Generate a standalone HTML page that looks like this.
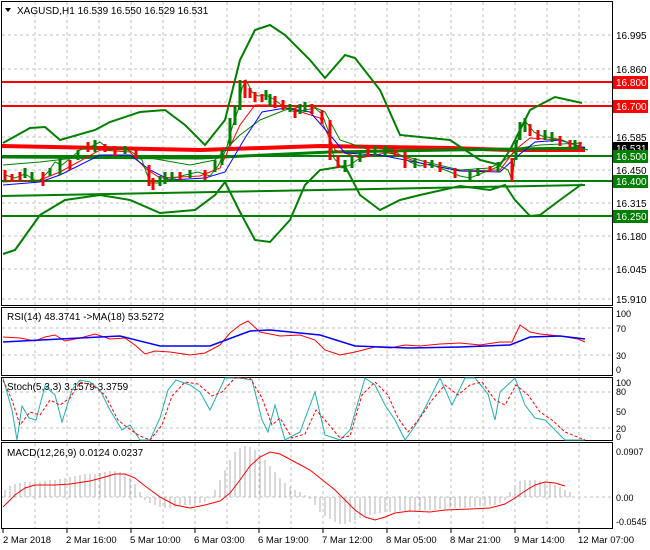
<!DOCTYPE html>
<html><head><meta charset="utf-8"><style>
body{margin:0;background:#fff}
svg{display:block;font-family:"Liberation Sans",sans-serif;font-size:10px}
</style></head><body>
<svg width="650" height="550" viewBox="0 0 650 550" xmlns="http://www.w3.org/2000/svg">
<rect width="650" height="550" fill="#fff"/>
<g fill="none" stroke="#000" stroke-width="1">
<rect x="1.5" y="1.5" width="611" height="304"/>
<rect x="1.5" y="307.5" width="611" height="68"/>
<rect x="1.5" y="377.5" width="611" height="63"/>
<rect x="1.5" y="442.5" width="611" height="86"/>
</g>
<g stroke="#c0c0c0" stroke-dasharray="3,3" stroke-width="1">
<path d="M35 2V305M67 2V305M99 2V305M131 2V305M163 2V305M195 2V305M227 2V305M259 2V305M291 2V305M323 2V305M355 2V305M387 2V305M419 2V305M451 2V305M483 2V305M515 2V305M547 2V305M579 2V305"/>
<path d="M35 308V375M67 308V375M99 308V375M131 308V375M163 308V375M195 308V375M227 308V375M259 308V375M291 308V375M323 308V375M355 308V375M387 308V375M419 308V375M451 308V375M483 308V375M515 308V375M547 308V375M579 308V375"/>
<path d="M35 378V440M67 378V440M99 378V440M131 378V440M163 378V440M195 378V440M227 378V440M259 378V440M291 378V440M323 378V440M355 378V440M387 378V440M419 378V440M451 378V440M483 378V440M515 378V440M547 378V440M579 378V440"/>
<path d="M35 443V528M67 443V528M99 443V528M131 443V528M163 443V528M195 443V528M227 443V528M259 443V528M291 443V528M323 443V528M355 443V528M387 443V528M419 443V528M451 443V528M483 443V528M515 443V528M547 443V528M579 443V528"/>
<path d="M2 35H612M2 69H612M2 102H612M2 137H612M2 170H612M2 203H612M2 236H612M2 269H612M2 299H612"/>
<path d="M2 328H612M2 355H612M2 392H612M2 428H612M2 497H612"/>
</g>
<g stroke-width="2" fill="none">
<path d="M2 82H612M2 106H612" stroke="#f00"/>
<path d="M2 156H612M2 181H612M2 216H612" stroke="#007f00"/>
<path d="M2 196L585 185" stroke="#007f00"/>
<path d="M2 146L200 150L320 146L450 148L510 150L585 150" stroke="#f00" stroke-width="4"/>
<path d="M2 157L200 158L330 152L450 150L585 148" stroke="#007f00" stroke-width="3"/>
</g>
<g fill="none" stroke="#007f00" stroke-width="2">
<path d="M3 143L30 128L45 127L60 140L95 130L110 122L140 112L165 110L185 125L205 145L225 120L240 60L255 30L270 25L285 35L310 60L325 78L345 55L355 58L380 90L400 135L450 140L480 160L500 165L510 150L530 110L555 97L582 103"/>
<path d="M3 254L15 250L40 215L65 200L100 195L130 200L160 213L195 210L215 195L225 182L240 212L255 240L270 242L290 220L305 185L320 170L345 166L360 195L380 210L400 200L420 195L460 186L490 190L505 185L515 200L530 216L540 215L560 200L582 184"/>
<path d="M3 165L40 162L100 155L150 158L190 165L215 160L240 135L260 120L285 110L310 105L325 112L340 140L370 150L400 155L430 163L460 170L490 168L505 160L520 148L540 145L582 143" stroke-width="1"/>
</g>
<g fill="none" stroke-width="1">
<path d="M3 182L40 180L60 172L100 150L130 152L145 168L160 178L200 176L220 168L240 125L255 105L275 105L295 110L320 118L335 150L360 158L390 152L420 163L460 171L500 170L515 150L530 138L560 140L585 148" stroke="#f00"/>
<path d="M3 185L40 182L60 175L100 155L130 155L150 170L170 180L205 178L225 172L245 138L262 112L285 108L310 112L330 135L345 153L380 155L420 163L460 171L500 172L515 158L535 142L560 140L585 148" stroke="#00f"/>
</g>
<g fill="none">
<path d="M5 175L15 178L25 174L38 182L48 172L55 162L62 165L72 157L80 150L92 146L100 142L110 150L122 148L132 152L142 160L150 183L158 183L166 180L175 178L185 175L198 172L210 176L218 166L226 150L232 128L238 110L242 88L246 80L252 92L258 96L266 95L275 100L285 108L295 112L305 110L315 108L322 114L328 130L334 158L342 168L350 165L360 158L370 152L380 150L392 149L400 155L410 162L420 166L430 164L440 168L450 172L460 176L470 178L480 174L490 170L500 166L508 170L512 180L516 150L520 128L526 122L534 132L542 136L552 138L562 140L572 144L582 148L588 150" stroke="#007f00" stroke-width="1"/>
</g>
<g stroke="#f00" stroke-width="3">
<path d="M5 170V180M12 174V182M20 172V180M43 172V186M70 160V170M88 142V152M105 144V152M115 146V156M136 148V158M149 165V186M153 178V190M180 172V180M205 170V180M245 80V98M250 88V98M255 92V102M262 94V102M275 96V108M283 100V110M295 108V118M312 104V114M322 110V124M330 120V160M338 155V168M368 148V156M395 146V156M405 152V168M425 160V168M440 162V172M455 168V178M490 166V172M512 158V182M530 124V136M538 130V140M560 136V146M570 140V148M580 142V152"/>
</g>
<g stroke="#007f00" stroke-width="3">
<path d="M25 168V178M32 172V182M50 168V176M60 158V175M78 150V160M95 140V152M125 146V154M160 176V186M165 172V184M172 172V182M190 170V178M215 160V172M222 150V165M230 118V145M235 105V125M240 80V110M266 90V100M270 94V106M290 104V112M300 104V114M305 102V112M345 160V172M352 156V168M360 152V162M375 146V156M385 146V156M415 158V168M432 160V168M470 170V182M478 168V176M498 162V172M516 140V160M520 122V140M525 118V132M545 130V140M552 132V142M575 140V150"/>
</g>
<g fill="#000">
<text x="616" y="39">16.995</text><text x="616" y="73">16.860</text>
<text x="616" y="141">16.585</text><text x="616" y="174">16.450</text>
<text x="616" y="207">16.315</text><text x="616" y="240">16.180</text>
<text x="616" y="273">16.045</text><text x="616" y="303">15.910</text>
</g>
<rect x="613" y="76" width="35" height="13" fill="#f00"/><text x="616" y="86" fill="#fff">16.800</text>
<rect x="613" y="100" width="35" height="13" fill="#f00"/><text x="616" y="110" fill="#fff">16.700</text>
<rect x="613" y="142" width="35" height="12" fill="#000"/><text x="616" y="152" fill="#fff">16.531</text>
<rect x="613" y="150" width="35" height="13" fill="#007f00"/><text x="616" y="160" fill="#fff">16.500</text>
<rect x="613" y="175" width="35" height="13" fill="#007f00"/><text x="616" y="185" fill="#fff">16.400</text>
<rect x="613" y="210" width="35" height="13" fill="#007f00"/><text x="616" y="220" fill="#fff">16.250</text>
<path d="M5 8L11 8L8 12Z" fill="#000"/>
<text x="17" y="14" fill="#000">XAGUSD,H1  16.539 16.550 16.529 16.531</text>
<text x="7" y="320">RSI(14) 48.3741  -&gt;MA(18) 53.5272</text>
<g font-size="9"><text x="616" y="317">100</text><text x="616" y="332">70</text><text x="616" y="359">30</text><text x="616" y="373">0</text></g>
<path d="M3 337L20 338L35 341L45 337L55 335L65 341L80 338L95 334L110 339L125 338L135 345L145 354L155 351L170 352L190 355L205 353L220 345L230 333L240 325L248 321L260 332L280 336L300 335L315 340L325 350L340 355L355 352L375 347L390 348L405 345L420 346L440 344L460 343L480 345L500 342L512 342L520 325L530 332L540 334L560 336L578 339L585 342" fill="none" stroke="#f00"/>
<path d="M3 342L60 339L120 336L160 346L210 346L250 331L270 330L320 335L355 346L410 348L460 347L510 345L530 337L560 336L585 339" fill="none" stroke="#00f" stroke-width="1.5"/>
<text x="7" y="390">Stoch(5,3,3) 3.1579 3.3759</text>
<g font-size="9"><text x="616" y="386">100</text><text x="616" y="395">80</text><text x="616" y="415">50</text><text x="616" y="432">20</text><text x="616" y="440">0</text></g>
<path d="M3 378L12 410L17 440L22 406L29 418L36 420L45 386L55 395L62 422L72 390L80 380L90 382L100 390L110 410L122 430L130 425L140 440L150 440L160 418L168 390L176 380L190 385L200 392L210 410L225 378L240 378L252 380L262 420L268 432L275 405L285 440L300 432L315 392L325 435L340 440L350 430L365 378L375 385L385 405L395 420L405 440L415 426L425 408L440 378L452 405L465 378L475 378L488 394L495 420L500 392L515 378L525 405L535 418L545 420L553 428L565 440L585 440" fill="none" stroke="#20b0b0"/>
<path d="M3 380L12 400L20 425L30 412L40 415L50 400L60 405L70 398L80 382L92 385L105 395L118 420L128 428L140 436L150 440L162 425L172 396L185 382L198 384L212 396L222 392L235 378L250 378L262 398L272 425L280 418L292 438L305 434L316 410L325 420L340 438L350 436L362 395L375 382L388 395L398 418L408 432L420 418L432 400L445 385L458 395L470 385L482 382L495 400L505 405L516 385L528 395L540 412L552 420L565 432L585 440" fill="none" stroke="#f00" stroke-dasharray="3,2"/>
<text x="7" y="456">MACD(12,26,9) 0.0124 0.0237</text>
<g font-size="9"><text x="616" y="455">0.0907</text><text x="616" y="501">0.00</text><text x="616" y="525">-0.0545</text></g>
<g stroke="#b0b0b0" stroke-width="1">
<path d="M5 497V490M10 497V486M15 497V484M20 497V483M25 497V482M30 497V482M35 497V482M40 497V482M45 497V481M50 497V480M55 497V480M60 497V479M65 497V478M70 497V477M75 497V476M80 497V475M85 497V474M90 497V474M95 497V474M100 497V473M105 497V472M110 497V471M115 497V471M120 497V472M125 497V474M130 497V478M135 497V484M140 497V492M145 497V500M150 497V503M155 497V505M160 497V507M165 497V508M170 497V508M175 497V507M180 497V506M185 497V505M190 497V505M195 497V504M200 497V503M205 497V502M210 497V498M215 497V490M220 497V480M225 497V470M230 497V460M235 497V452M240 497V448M245 497V446M250 497V447M255 497V450M260 497V455M265 497V460M270 497V466M275 497V472M280 497V478M285 497V483M290 497V487M295 497V490M300 497V492M305 497V495M310 497V499M315 497V505M320 497V512M325 497V516M330 497V519M335 497V522M340 497V524M345 497V524M350 497V522M355 497V520M360 497V518M365 497V516M370 497V515M375 497V514M380 497V513M385 497V512M390 497V512M395 497V512M400 497V511M405 497V511M410 497V511M415 497V511M420 497V510M425 497V510M430 497V510M435 497V510M440 497V509M445 497V509M450 497V508M455 497V508M460 497V508M465 497V508M470 497V507M475 497V507M480 497V506M485 497V506M490 497V505M495 497V505M500 497V503M505 497V500M510 497V492M515 497V485M520 497V481M525 497V480M530 497V480M535 497V480M540 497V481M545 497V482M550 497V483M555 497V485M560 497V487M565 497V490M570 497V492"/>
</g>
<path d="M3 507L15 495L25 488L35 485L55 485L70 484L90 481L105 477L115 474L125 474L135 478L145 486L160 497L175 505L190 508L205 505L220 501L230 493L240 480L250 466L260 457L270 452L280 454L295 462L310 470L320 478L335 490L345 500L355 510L365 517L375 520L385 517L395 513L410 511L430 512L445 510L470 509L490 508L505 504L515 498L525 491L535 485L545 482L555 483L565 486" fill="none" stroke="#f00"/>
<g stroke="#000"><path d="M3 529V533M67 529V533M131 529V533M195 529V533M259 529V533M323 529V533M387 529V533M451 529V533M515 529V533M579 529V533"/></g>
<g font-size="9.5">
<text x="3" y="543">2 Mar 2018</text><text x="66" y="543">2 Mar 16:00</text>
<text x="130" y="543">5 Mar 10:00</text><text x="194" y="543">6 Mar 03:00</text>
<text x="258" y="543">6 Mar 19:00</text><text x="322" y="543">7 Mar 12:00</text>
<text x="386" y="543">8 Mar 05:00</text><text x="450" y="543">8 Mar 21:00</text>
<text x="514" y="543">9 Mar 14:00</text><text x="578" y="543">12 Mar 07:00</text>
</g>
</svg>
</body></html>
